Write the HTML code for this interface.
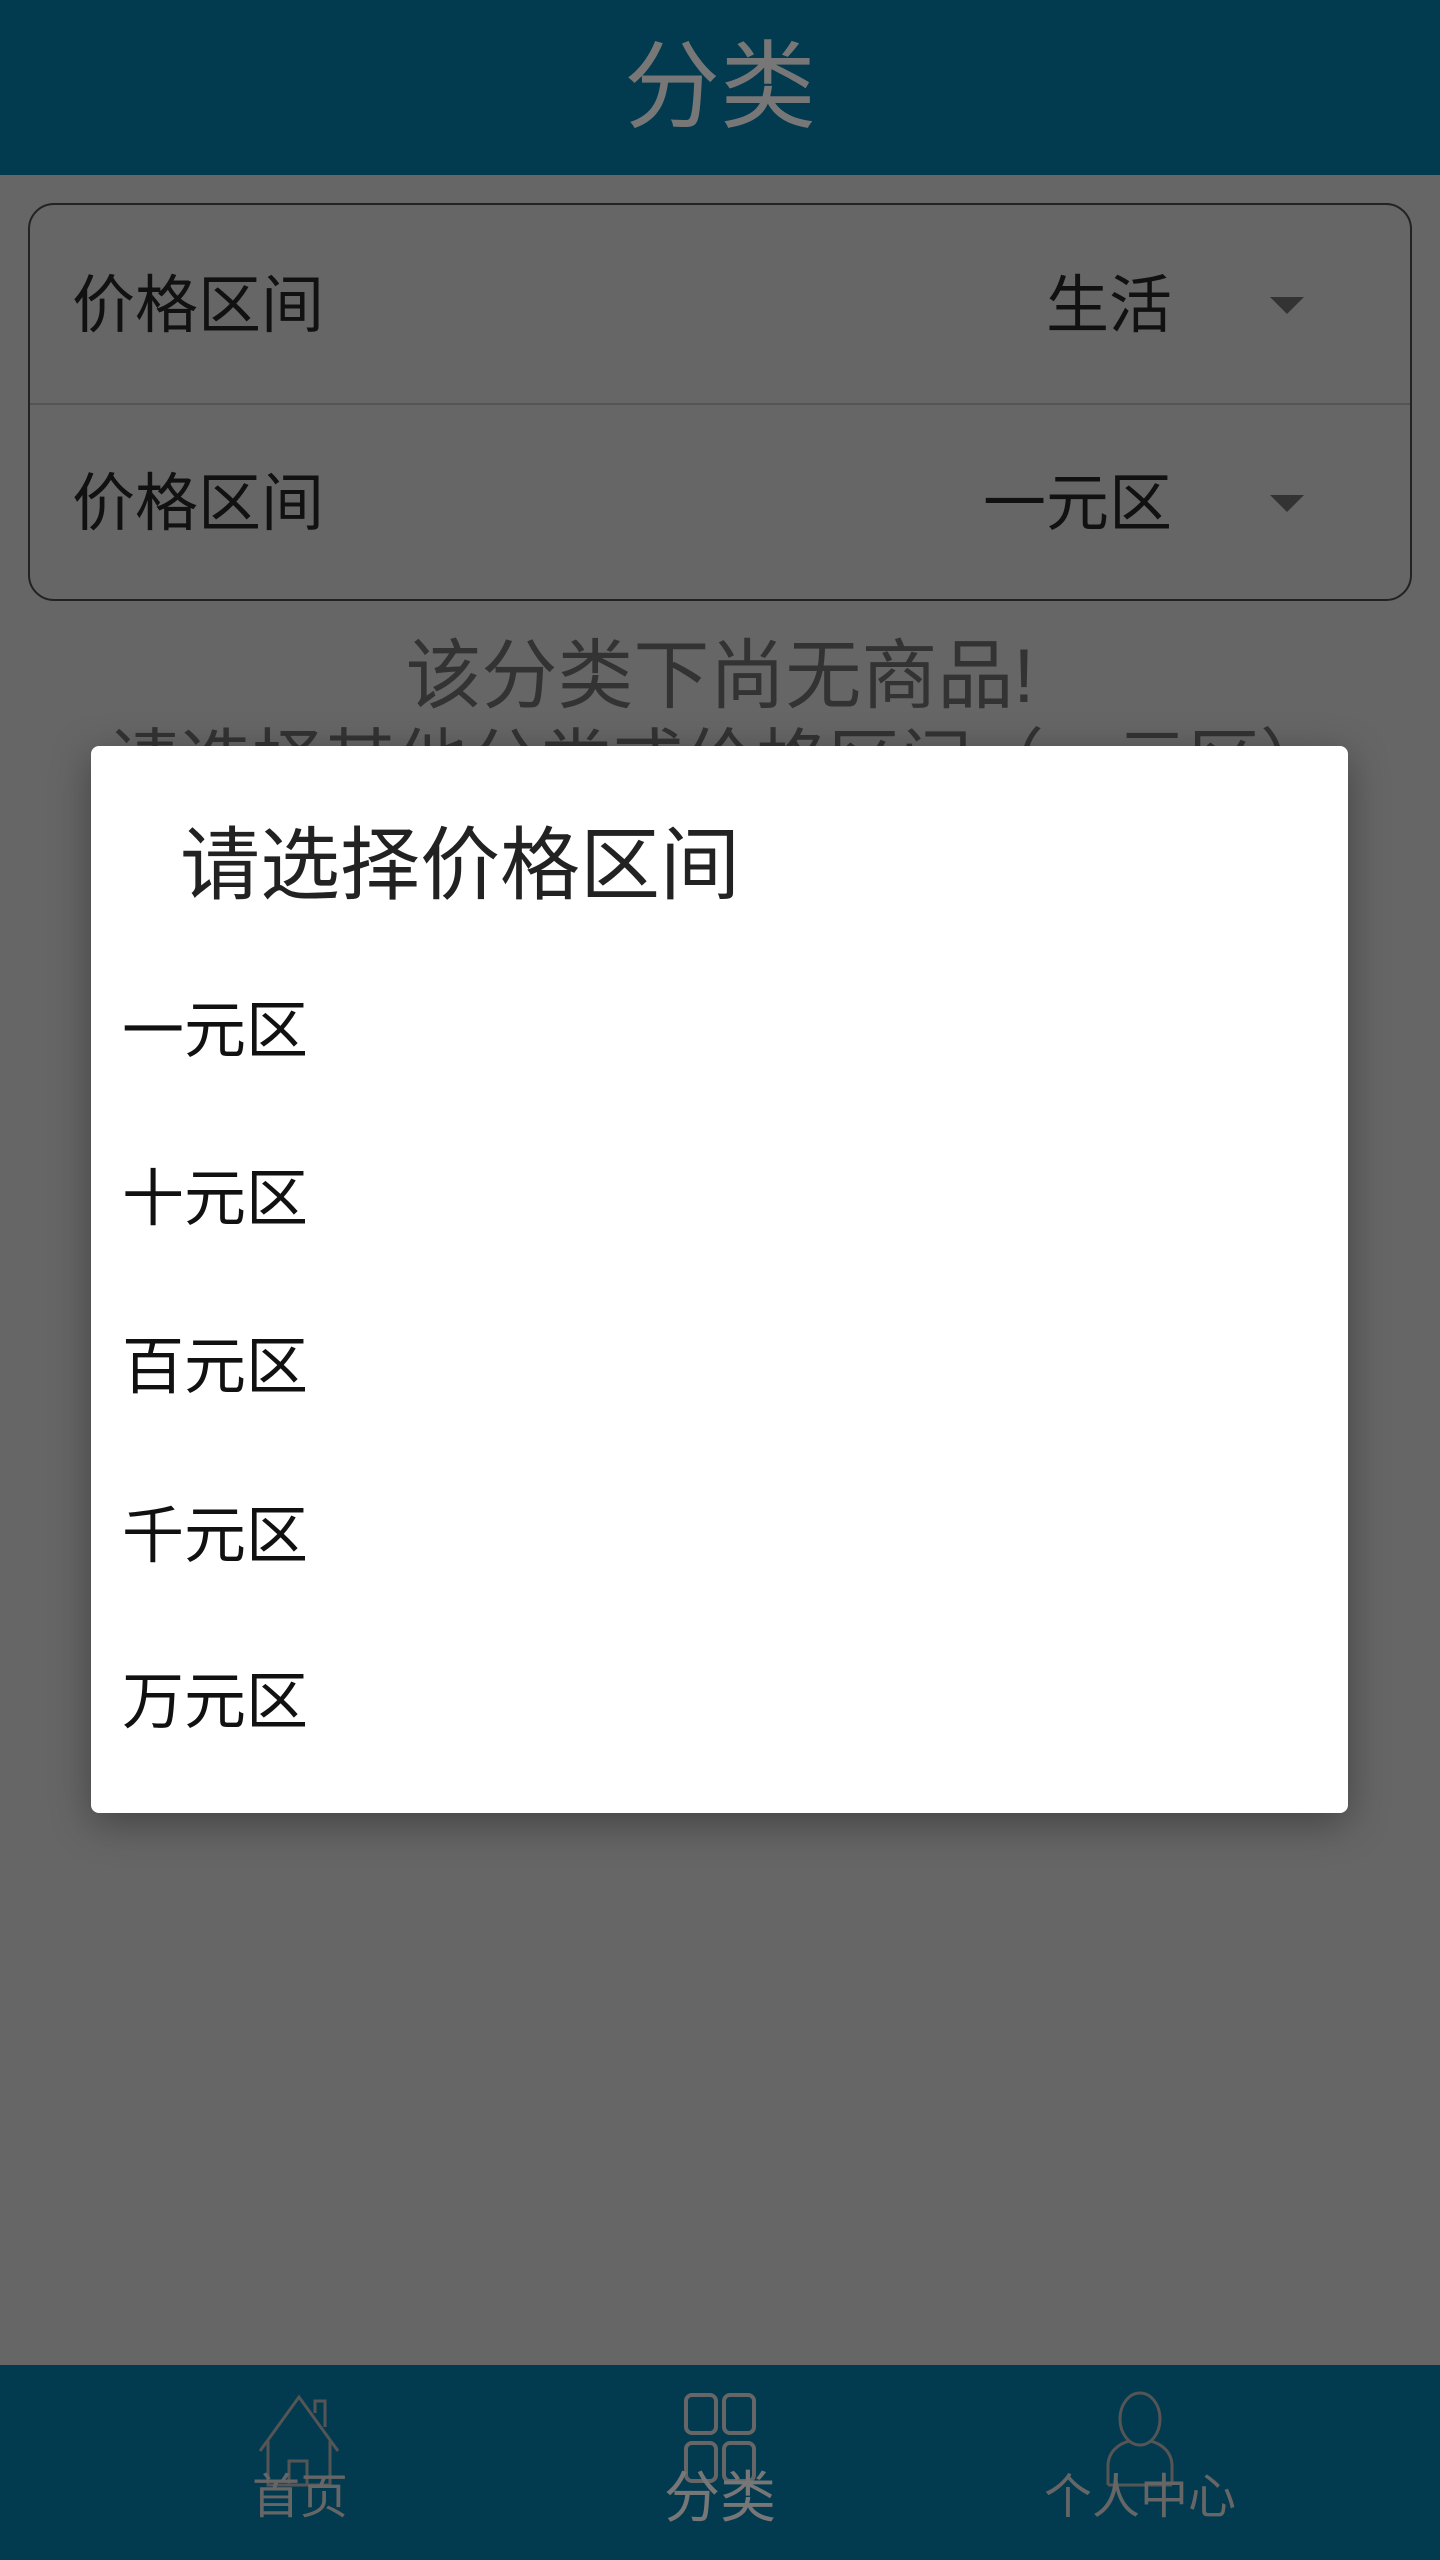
<!DOCTYPE html>
<html><head><meta charset="utf-8"><style>
*{margin:0;padding:0;box-sizing:border-box}
body{width:1440px;height:2560px;background:#666;position:relative;overflow:hidden;font-family:"Liberation Sans","Noto Sans CJK SC",sans-serif}
.hdr{position:absolute;left:0;top:0;width:1440px;height:175px;background:#023a50;color:#777;font-size:96px;text-align:center;line-height:175px}
.card{position:absolute;left:28px;top:203px;width:1384px;height:398px;border:2px solid #222;border-radius:26px}
.row{position:absolute;left:0;width:100%;height:198px}
.row .l{position:absolute;left:42px;top:2px;line-height:198px;font-size:63px;color:#111}
.row .r{position:absolute;right:238px;top:2px;line-height:198px;font-size:63px;color:#111}
.row .a{position:absolute;left:1240px;top:92px;width:0;height:0;border-left:17px solid transparent;border-right:17px solid transparent;border-top:17px solid #333}
.div{position:absolute;left:0;top:198px;width:100%;height:2px;background:#555}
.msg{position:absolute;left:0;width:1440px;text-align:center;font-size:76px;color:#333;white-space:nowrap}
.dlg{position:absolute;left:91px;top:746px;width:1257px;height:1067px;background:#fff;border-radius:8px;box-shadow:0 10px 40px rgba(0,0,0,.35)}
.title{position:absolute;left:180px;top:818px;font-size:80px;color:#222;line-height:96px}
.item{position:absolute;left:122px;font-size:62px;color:#111;line-height:80px}
.nav{position:absolute;left:0;top:2365px;width:1440px;height:195px;background:#023a50}
.lab{position:absolute;color:#666;font-size:48px;text-align:center;width:300px}
</style></head><body>
<div class="hdr">分类</div>
<div class="card">
 <div class="row" style="top:0"><span class="l">价格区间</span><span class="r">生活</span><span class="a"></span></div>
 <div class="div"></div>
 <div class="row" style="top:198px"><span class="l">价格区间</span><span class="r">一元区</span><span class="a"></span></div>
</div>
<div class="msg" style="top:614px">该分类下尚无商品!</div>
<div class="msg" style="top:704px;font-size:72px">请选择其他分类或价格区间（一元区）</div>
<div class="dlg"></div>
<div class="title">请选择价格区间</div>
<div class="item" style="top:992px">一元区</div>
<div class="item" style="top:1160px">十元区</div>
<div class="item" style="top:1328px">百元区</div>
<div class="item" style="top:1497px">千元区</div>
<div class="item" style="top:1663px">万元区</div>
<div class="nav">
 <svg style="position:absolute;left:255px;top:26px" width="90" height="100" viewBox="0 0 90 100" fill="none" stroke="#555" stroke-width="3">
  <path d="M5 60 L44 6 L83 60"/><path d="M13 50 V94 H75 V50"/><path d="M34 94 V70 H52 V94"/><path d="M60 22 V10 H70 V36"/>
 </svg>
 <svg style="position:absolute;left:680px;top:24px" width="80" height="100" viewBox="0 0 80 100" fill="none" stroke="#666" stroke-width="4">
  <rect x="6" y="6" width="30" height="38" rx="6"/><rect x="44" y="6" width="30" height="38" rx="6"/><rect x="6" y="54" width="30" height="38" rx="6"/><rect x="44" y="54" width="30" height="38" rx="6"/>
 </svg>
 <svg style="position:absolute;left:1100px;top:26px" width="80" height="100" viewBox="0 0 80 100" fill="none" stroke="#555" stroke-width="3">
  <ellipse cx="40" cy="28" rx="20" ry="26"/><path d="M8 94 V75 C8 60 20 52 30 50 M72 94 V75 C72 60 60 52 50 50 M8 94 H72"/>
 </svg>
 <div class="lab" style="left:150px;top:92px">首页</div>
 <div class="lab" style="left:570px;top:88px;font-size:56px;color:#777">分类</div>
 <div class="lab" style="left:990px;top:92px">个人中心</div>
</div>
</body></html>
